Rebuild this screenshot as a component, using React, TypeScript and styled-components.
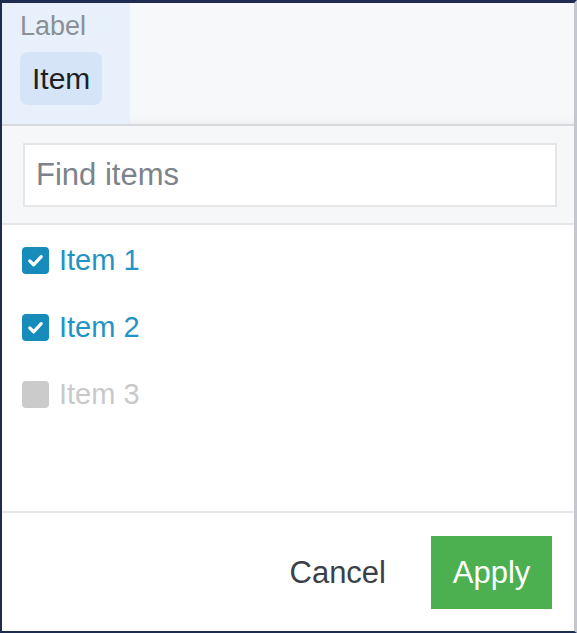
import React from "react";
import styled, { createGlobalStyle } from "styled-components";

const Global = createGlobalStyle`
  html, body { margin: 0; padding: 0; background: #ffffff; }
  body { font-family: "Liberation Sans", Arial, sans-serif; }
  * { box-sizing: border-box; }
`;

const Frame = styled.div`
  width: 577px;
  height: 633px;
  display: flex;
  flex-direction: column;
  border-top: 3px solid #1e2c52;
  border-left: 2px solid #1e2c52;
  border-bottom: 2px solid #1e2c52;
  border-right: 3px solid #c4c7ce;
  background: #ffffff;
  overflow: hidden;
`;

const Header = styled.div`
  height: 123px;
  flex: none;
  display: flex;
  background: #f6f8fa;
  border-bottom: 2px solid #d7d9dc;
  box-shadow: inset 0 -10px 10px -8px rgba(0, 0, 0, 0.05);
`;

const Column = styled.div<{ $active?: boolean }>`
  width: 128px;
  padding: 8px 0 0 18px;
  display: flex;
  flex-direction: column;
  align-items: flex-start;
  gap: 11px;
  background: ${(p) => (p.$active ? "#e8f0fb" : "transparent")};
`;

const ColumnLabel = styled.div`
  font-size: 27px;
  line-height: 30px;
  color: #8a9096;
`;

const Chip = styled.div`
  height: 53px;
  padding: 0 12px;
  display: flex;
  align-items: center;
  border-radius: 8px;
  background: #d5e5f7;
  color: #1d1f22;
  font-size: 30px;
`;

const SearchBar = styled.div`
  flex: none;
  padding: 17px 17px 16px 21px;
  background: #f6f7f9;
  border-bottom: 2px solid #e6e7e9;
`;

const SearchInput = styled.input`
  display: block;
  width: 100%;
  height: 64px;
  border: 2px solid #e5e6e8;
  background: #ffffff;
  padding: 0 11px;
  font-family: "Liberation Sans", Arial, sans-serif;
  font-size: 31px;
  color: #333;
  outline: none;
  &::placeholder { color: #7d838b; }
`;

const List = styled.div`
  flex: 1;
  padding: 2px 0 0 20px;
  display: flex;
  flex-direction: column;
`;

const Row = styled.label<{ $disabled?: boolean }>`
  height: 67px;
  display: flex;
  align-items: center;
  gap: 10px;
  font-size: 29px;
  color: ${(p) => (p.$disabled ? "#c8c9cb" : "#1f94c5")};
`;

const Box = styled.span<{ $checked?: boolean; $disabled?: boolean }>`
  width: 27px;
  height: 27px;
  border-radius: 4px;
  display: flex;
  align-items: center;
  justify-content: center;
  background: ${(p) => (p.$disabled ? "#cbcbcb" : p.$checked ? "#178cba" : "#fff")};
`;

const Footer = styled.div`
  height: 120px;
  flex: none;
  border-top: 2px solid #e6e7e9;
  display: flex;
  align-items: center;
  justify-content: flex-end;
  padding: 1px 22px 0 0;
  gap: 23px;
`;

const TextButton = styled.button`
  border: none;
  background: none;
  padding: 0 22px;
  height: 73px;
  font-family: "Liberation Sans", Arial, sans-serif;
  font-size: 31px;
  color: #3a3f48;
`;

const PrimaryButton = styled.button`
  border: none;
  width: 121px;
  height: 73px;
  flex: none;
  background: #4caf50;
  color: #ffffff;
  font-family: "Liberation Sans", Arial, sans-serif;
  font-size: 31px;
  padding: 0;
`;

const items = [
  { label: "Item 1", checked: true, disabled: false },
  { label: "Item 2", checked: true, disabled: false },
  { label: "Item 3", checked: false, disabled: true },
];

const Check = () => (
  <svg width="19" height="19" viewBox="0 0 20 20">
    <path d="M4 10.5 L8 14.5 L16 6" fill="none" stroke="#ffffff" strokeWidth="3.4" strokeLinecap="round" strokeLinejoin="round" />
  </svg>
);

export default function App() {
  return (
    <>
      <Global />
      <Frame>
        <Header>
          <Column $active>
            <ColumnLabel>Label</ColumnLabel>
            <Chip>Item</Chip>
          </Column>
        </Header>
        <SearchBar>
          <SearchInput placeholder="Find items" />
        </SearchBar>
        <List>
          {items.map((it) => (
            <Row key={it.label} $disabled={it.disabled}>
              <Box $checked={it.checked} $disabled={it.disabled}>
                {it.checked && <Check />}
              </Box>
              {it.label}
            </Row>
          ))}
        </List>
        <Footer>
          <TextButton>Cancel</TextButton>
          <PrimaryButton>Apply</PrimaryButton>
        </Footer>
      </Frame>
    </>
  );
}
